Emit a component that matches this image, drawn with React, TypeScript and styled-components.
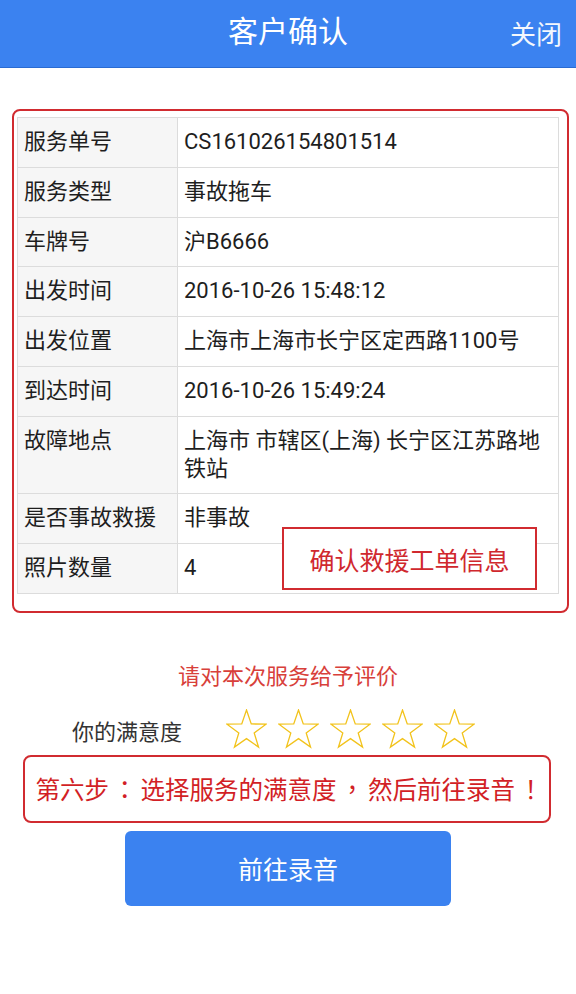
import React from "react";
import styled, { createGlobalStyle } from "styled-components";

const GlobalStyle = createGlobalStyle`
  html, body { margin: 0; padding: 0; background: #ffffff; }
  body {
    font-family: Roboto, "Noto Sans CJK SC", sans-serif;
  }
`;

const Page = styled.div`
  width: 576px;
  min-height: 994px;
  background: #ffffff;
  display: flex;
  flex-direction: column;
`;

const Header = styled.header`
  height: 67px;
  background: #3b82f0;
  border-bottom: 1px solid #2a6bd2;
  display: grid;
  grid-template-columns: 1fr auto 1fr;
  align-items: center;
  color: #ffffff;
`;

const Title = styled.h1`
  grid-column: 2;
  margin: 0;
  font-size: 30px;
  font-weight: 400;
  line-height: 1;
  padding-bottom: 4px;
`;

const Close = styled.span`
  grid-column: 3;
  justify-self: end;
  margin-right: 14px;
  font-size: 26px;
  line-height: 1;
  padding-top: 2px;
  color: #f4f7fd;
`;

const Main = styled.main`
  padding: 41px 7px 0 12px;
  display: flex;
  flex-direction: column;
`;

const Frame = styled.section`
  position: relative;
  border: 2px solid #d12b30;
  border-radius: 8px;
  padding: 6px 8px 17px 3px;
`;

const Table = styled.table`
  width: 100%;
  border-collapse: collapse;
  table-layout: fixed;
  border: 1px solid #dcdcdc;
`;

const Cell = styled.td<{ $label?: boolean }>`
  border: 1px solid #dcdcdc;
  padding: 10px 6px 10.75px;
  font-size: 22px;
  line-height: 28px;
  color: #1e1e1e;
  vertical-align: top;
  background: ${(p) => (p.$label ? "#f6f6f6" : "#ffffff")};
  white-space: ${(p) => (p.$label ? "nowrap" : "normal")};
`;

const Note = styled.div`
  position: absolute;
  left: 268px;
  top: 416px;
  width: 255px;
  height: 63px;
  box-sizing: border-box;
  border: 2px solid #d12b30;
  background: #ffffff;
  display: flex;
  align-items: center;
  justify-content: center;
  font-size: 25px;
  color: #d0282e;
`;

const RateTitle = styled.div`
  margin-top: 49px;
  text-align: center;
  font-size: 22px;
  line-height: 30px;
  color: #d8403a;
`;

const RateRow = styled.div`
  margin-top: 17px;
  display: flex;
  align-items: center;
  padding-left: 72px;
  height: 40px;
`;

const RateLabel = styled.span`
  font-size: 22px;
  color: #333333;
  width: 154px;
  padding-top: 2px;
`;

const Stars = styled.div`
  display: flex;
  gap: 11px;
`;

const Step = styled.div`
  margin: 6px 0 0 23px;
  width: 528px;
  height: 68px;
  box-sizing: border-box;
  border: 2px solid #d12b30;
  border-radius: 8px;
  display: flex;
  align-items: center;
  justify-content: center;
  font-family: "Noto Sans CJK TC", "Noto Sans CJK SC", sans-serif;
  font-size: 24.5px;
  color: #d21f26;
  padding-left: 8px;
  white-space: nowrap;
`;

const Punct = styled.span`
  margin: 0 3.5px;
`;

const Button = styled.button`
  margin: 8px 0 0 125px;
  width: 326px;
  height: 75px;
  border: none;
  border-radius: 6px;
  background: #3b82f0;
  color: #ffffff;
  font-family: Roboto, "Noto Sans CJK SC", sans-serif;
  font-size: 25px;
  cursor: pointer;
`;

const starPoints = (() => {
  const cx = 20.5;
  const cy = 21.5;
  const R = 20.5;
  const r = 8.1;
  const pts: string[] = [];
  for (let i = 0; i < 10; i++) {
    const a = -Math.PI / 2 + (i * Math.PI) / 5;
    const rad = i % 2 === 0 ? R : r;
    pts.push(`${(cx + rad * Math.cos(a)).toFixed(2)},${(cy + rad * Math.sin(a)).toFixed(2)}`);
  }
  return pts.join(" ");
})();

const Star = () => (
  <svg width="41" height="40" viewBox="0 0 41 40">
    <polygon points={starPoints} fill="none" stroke="#f2c31c" strokeWidth="1.3" strokeLinejoin="miter" />
  </svg>
);

const rows: [string, string][] = [
  ["服务单号", "CS161026154801514"],
  ["服务类型", "事故拖车"],
  ["车牌号", "沪B6666"],
  ["出发时间", "2016-10-26 15:48:12"],
  ["出发位置", "上海市上海市长宁区定西路1100号"],
  ["到达时间", "2016-10-26 15:49:24"],
  ["故障地点", "上海市 市辖区(上海) 长宁区江苏路地铁站"],
  ["是否事故救援", "非事故"],
  ["照片数量", "4"],
];

export default function App() {
  return (
    <Page>
      <GlobalStyle />
      <Header>
        <Title>客户确认</Title>
        <Close>关闭</Close>
      </Header>
      <Main>
        <Frame>
          <Table>
            <colgroup>
              <col style={{ width: "160px" }} />
              <col />
            </colgroup>
            <tbody>
              {rows.map(([k, v]) => (
                <tr key={k}>
                  <Cell $label>{k}</Cell>
                  <Cell>{v}</Cell>
                </tr>
              ))}
            </tbody>
          </Table>
          <Note>确认救援工单信息</Note>
        </Frame>
      </Main>
      <RateTitle>请对本次服务给予评价</RateTitle>
      <RateRow>
        <RateLabel>你的满意度</RateLabel>
        <Stars>
          {[0, 1, 2, 3, 4].map((i) => (
            <Star key={i} />
          ))}
        </Stars>
      </RateRow>
      <Step>
        第六步<Punct>：</Punct>选择服务的满意度<Punct>，</Punct>然后前往录音<Punct>！</Punct>
      </Step>
      <Button>前往录音</Button>
    </Page>
  );
}
